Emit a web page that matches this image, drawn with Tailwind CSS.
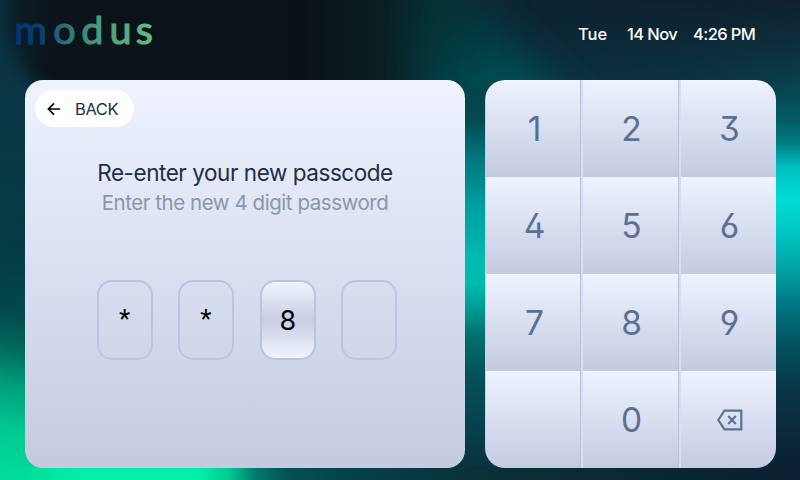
<!DOCTYPE html>
<html lang="en">
<head>
<meta charset="utf-8">
<title>modus – Passcode</title>
<script src="https://cdn.jsdelivr.net/npm/@tailwindcss/browser@4"></script>
</head>
<body class="relative w-[800px] h-[480px] overflow-hidden bg-[#0a2630] font-['Inter','Roboto',sans-serif]">
<!-- Aurora backdrop -->
<svg class="absolute inset-0" width="800" height="480" viewBox="0 0 800 480" aria-hidden="true">
  <defs>
    <linearGradient id="top"><stop offset="0" stop-color="#0b2430"/><stop offset=".035" stop-color="#0b1a24"/><stop offset=".07" stop-color="#0b131b"/><stop offset=".37" stop-color="#0a1117"/><stop offset=".46" stop-color="#091c1f"/><stop offset=".54" stop-color="#08292f"/><stop offset=".62" stop-color="#0c2634"/><stop offset=".75" stop-color="#0d2332"/><stop offset="1" stop-color="#0f2130"/></linearGradient>
    <linearGradient id="glow" x2="0" y2="1"><stop offset="0" stop-color="#075058" stop-opacity="0"/><stop offset=".4" stop-color="#075058" stop-opacity=".25"/><stop offset="1" stop-color="#045058" stop-opacity=".85"/></linearGradient>
    <linearGradient id="gmask"><stop offset="0" stop-color="#000"/><stop offset=".3" stop-color="#777"/><stop offset=".6" stop-color="#888"/><stop offset="1" stop-color="#fff"/></linearGradient>
    <mask id="m"><rect x="500" width="300" height="100" fill="url(#gmask)"/></mask>
    <linearGradient id="ray" gradientUnits="userSpaceOnUse" x1="420" y1="0" x2="500" y2="90"><stop offset="0" stop-color="#063438" stop-opacity=".5"/><stop offset=".5" stop-color="#043e42" stop-opacity=".8"/><stop offset="1" stop-color="#005257"/></linearGradient>
    <linearGradient id="left" gradientUnits="userSpaceOnUse" x1="0" y1="0" x2="-90" y2="470"><stop offset="0" stop-color="#0a2e3d"/><stop offset=".23" stop-color="#0a3846"/><stop offset=".5" stop-color="#053c44"/><stop offset=".63" stop-color="#02484b"/><stop offset=".71" stop-color="#01695b"/><stop offset=".79" stop-color="#00a07f"/><stop offset=".88" stop-color="#00ca92"/><stop offset="1" stop-color="#00e09c"/></linearGradient>
    <linearGradient id="gap" gradientUnits="userSpaceOnUse" x1="0" y1="80" x2="0" y2="480"><stop offset="0" stop-color="#04393f"/><stop offset=".1" stop-color="#034a50"/><stop offset=".2" stop-color="#027880"/><stop offset=".32" stop-color="#00a0a2"/><stop offset=".44" stop-color="#00b9af"/><stop offset=".51" stop-color="#00bbac"/><stop offset=".57" stop-color="#009c92"/><stop offset=".64" stop-color="#016f6d"/><stop offset=".74" stop-color="#045157"/><stop offset=".9" stop-color="#083d48"/><stop offset="1" stop-color="#0a3038"/></linearGradient>
    <linearGradient id="right" gradientUnits="userSpaceOnUse" x1="776" y1="80" x2="776" y2="480"><stop offset="0" stop-color="#064a54"/><stop offset=".1" stop-color="#035a62"/><stop offset=".16" stop-color="#017f84"/><stop offset=".22" stop-color="#00c1c0"/><stop offset=".3" stop-color="#00dcd6"/><stop offset=".38" stop-color="#00c6c2"/><stop offset=".47" stop-color="#00a3a6"/><stop offset=".57" stop-color="#017480"/><stop offset=".66" stop-color="#035260"/><stop offset=".78" stop-color="#0a3445"/><stop offset=".9" stop-color="#0a2738"/><stop offset="1" stop-color="#0a2030"/></linearGradient>
    <linearGradient id="bottom" gradientUnits="userSpaceOnUse" x1="0" y1="455" x2="800" y2="485"><stop offset="0" stop-color="#00dc9a"/><stop offset=".1" stop-color="#00eea7"/><stop offset=".25" stop-color="#00efa9"/><stop offset=".285" stop-color="#00cc96"/><stop offset=".32" stop-color="#017a6c"/><stop offset=".36" stop-color="#045052"/><stop offset=".45" stop-color="#074048"/><stop offset=".6" stop-color="#0a3038"/><stop offset="1" stop-color="#0a2030"/></linearGradient>
    <linearGradient id="fade" x2="0" y2="1"><stop offset="0" stop-color="#000"/><stop offset="1" stop-color="#fff"/></linearGradient>
    <linearGradient id="fadeX"><stop offset="0" stop-color="#000"/><stop offset="1" stop-color="#fff"/></linearGradient>
    <mask id="mBottom" maskUnits="userSpaceOnUse" x="0" y="440" width="800" height="40"><rect y="450" width="60" height="30" fill="url(#fadeX)"/><rect x="60" y="450" width="740" height="30" fill="#fff"/></mask>
    <filter id="soft" filterUnits="userSpaceOnUse" x="-80" y="-60" width="240" height="600"><feGaussianBlur stdDeviation="8"/></filter>
    <mask id="mLeft" maskUnits="userSpaceOnUse" x="0" y="0" width="60" height="480"><path d="M-60-40H2L8 40 28 76 80 120V520H-60Z" fill="#fff" filter="url(#soft)"/></mask>
    <mask id="mGap" maskUnits="userSpaceOnUse" x="455" y="80" width="50" height="400"><rect x="455" y="80" width="50" height="40" fill="url(#fade)"/><rect x="455" y="120" width="50" height="360" fill="#fff"/></mask>
    <mask id="mRight" maskUnits="userSpaceOnUse" x="740" y="60" width="60" height="420"><rect x="740" y="76" width="60" height="34" fill="url(#fade)"/><rect x="740" y="110" width="60" height="370" fill="#fff"/></mask>
    <filter id="b" x="-50%" y="-50%" width="200%" height="200%"><feGaussianBlur stdDeviation="20"/></filter>
  </defs>
  <rect width="800" height="140" fill="url(#top)"/>
  <rect x="500" width="300" height="100" fill="url(#glow)" mask="url(#m)"/>
  <rect x="740" y="99" width="60" height="20" fill="#064a54"/>
  <path d="M415-30 L445 -30 L620 160 L420 160Z" fill="url(#ray)" filter="url(#b)"/>
  <rect width="60" height="480" fill="url(#left)" mask="url(#mLeft)"/>
  <rect x="455" y="80" width="50" height="400" fill="url(#gap)" mask="url(#mGap)"/>
  <rect x="740" y="60" width="60" height="420" fill="url(#right)" mask="url(#mRight)"/>
  <rect y="467" width="776" height="13" fill="url(#bottom)" mask="url(#mBottom)"/>
</svg>

<div class="relative h-full flex flex-col">
  <header class="h-20 flex justify-between pl-[14px] pr-[44px]">
    <svg width="150" height="60" role="img" aria-label="modus">
      <defs><linearGradient id="logo" gradientUnits="userSpaceOnUse" x1="2" y1="0" x2="140" y2="0"><stop offset="0" stop-color="#02356f"/><stop offset=".18" stop-color="#083f73"/><stop offset=".35" stop-color="#2a7078"/><stop offset=".6" stop-color="#4b9d78"/><stop offset="1" stop-color="#66bd78"/></linearGradient></defs>
      <text x="0.2 39.3 67.3 95.5 121.8" y="43.8" fill="url(#logo)" stroke="url(#logo)" stroke-width="1.2" font-family="Lato" font-weight="400" font-size="39.5">modus</text>
    </svg>
    <div class="flex pt-[22px] h-[46px] items-center text-white font-medium text-[16.5px] leading-6 whitespace-nowrap">
      <span class="w-[49px]">Tue</span><span class="w-[66px] tracking-[-0.6px]">14 Nov</span><span class="w-[63px] tracking-[-0.6px]">4:26 PM</span>
    </div>
  </header>
  <main class="flex pl-[25px] gap-5 h-[388px]">
    <section class="w-[440px] rounded-[18px] bg-linear-to-b from-[#eff3ff] via-[#d9dff1] to-[#c4cbe0] p-[10px] flex flex-col">
      <button class="w-[99px] h-[37px] rounded-full bg-white flex items-center pl-3 text-[#1f2d45] text-base leading-6">
        <svg width="14" height="14" viewBox="0 0 14 14" fill="none" stroke="#000" stroke-width="1.7"><path d="M13.2 7H1.6M7 1.3 1.4 7 7 12.7"/></svg>
        <span class="ml-[14px] tracking-[-0.4px] text-[16.5px]">BACK</span>
      </button>
      <div class="mt-[30px] text-center whitespace-nowrap">
        <h1 class="text-[22.5px] leading-8 tracking-[-0.45px] text-[#1f2d45]">Re-enter your new passcode</h1>
        <p class="text-[20.5px] leading-7 tracking-[-0.45px] text-[#8a97aa]">Enter the new 4 digit password</p>
      </div>
      <div class="mt-[63px] ml-[62px] flex gap-[25.4px] text-[27px] text-black">
        <div class="w-14 h-20 rounded-[15px] border-2 border-[#bcc4e1] flex items-center justify-center font-['Roboto'] text-[26px] pb-px pr-px">*</div>
        <div class="w-14 h-20 rounded-[15px] border-2 border-[#bcc4e1] flex items-center justify-center font-['Roboto'] text-[26px] pb-px pr-px">*</div>
        <div class="w-14 h-20 rounded-[15px] border-2 border-[#bcc4e1] bg-linear-to-b from-[#eff3ff] via-[#c8cee3] to-[#eff3ff] flex items-center justify-center pt-0.5">8</div>
        <div class="w-14 h-20 rounded-[15px] border-2 border-[#bcc4e1]"></div>
      </div>
    </section>
    <section class="w-[291px] h-[388px] overflow-hidden rounded-[20px] grid grid-cols-[95px_98px_98px] grid-rows-4 text-[33.5px] text-[#5c7091] [font-feature-settings:'cv09','cv03','cv04','cv02']">
      <div class="flex items-center justify-center pl-[3px] pt-0.5 border-l border-[#c9cfe3] bg-linear-to-b from-[#eff3ff] via-[#d9dff1] to-[#c4cbe0]">1</div>
      <div class="flex items-center justify-center pl-1 pt-0.5 border-l border-[#b9c0da] shadow-[inset_2px_0_0_#d9dff2] bg-linear-to-b from-[#eff3ff] via-[#d9dff1] to-[#c4cbe0]">2</div>
      <div class="flex items-center justify-center pl-1 pt-0.5 border-l border-[#b9c0da] shadow-[inset_2px_0_0_#d9dff2] bg-linear-to-b from-[#eff3ff] via-[#d9dff1] to-[#c4cbe0]">3</div>
      <div class="flex items-center justify-center pl-[3px] pt-0.5 border-l border-[#c9cfe3] bg-linear-to-b from-[#eff3ff] via-[#d9dff1] to-[#c4cbe0]">4</div>
      <div class="flex items-center justify-center pl-1 pt-0.5 border-l border-[#b9c0da] shadow-[inset_2px_0_0_#d9dff2] bg-linear-to-b from-[#eff3ff] via-[#d9dff1] to-[#c4cbe0]">5</div>
      <div class="flex items-center justify-center pl-1 pt-0.5 border-l border-[#b9c0da] shadow-[inset_2px_0_0_#d9dff2] bg-linear-to-b from-[#eff3ff] via-[#d9dff1] to-[#c4cbe0]">6</div>
      <div class="flex items-center justify-center pl-[3px] pt-0.5 border-l border-[#c9cfe3] bg-linear-to-b from-[#eff3ff] via-[#d9dff1] to-[#c4cbe0]">7</div>
      <div class="flex items-center justify-center pl-1 pt-0.5 border-l border-[#b9c0da] shadow-[inset_2px_0_0_#d9dff2] bg-linear-to-b from-[#eff3ff] via-[#d9dff1] to-[#c4cbe0]">8</div>
      <div class="flex items-center justify-center pl-1 pt-0.5 border-l border-[#b9c0da] shadow-[inset_2px_0_0_#d9dff2] bg-linear-to-b from-[#eff3ff] via-[#d9dff1] to-[#c4cbe0]">9</div>
      <div class="border-l border-[#c9cfe3] bg-linear-to-b from-[#eff3ff] via-[#d9dff1] to-[#c4cbe0]"></div>
      <div class="flex items-center justify-center pl-1 pt-0.5 border-l border-[#b9c0da] shadow-[inset_2px_0_0_#d9dff2] bg-linear-to-b from-[#eff3ff] via-[#d9dff1] to-[#c4cbe0]">0</div>
      <div class="flex items-center justify-center pl-1 border-l border-[#b9c0da] shadow-[inset_2px_0_0_#d9dff2] bg-linear-to-b from-[#eff3ff] via-[#d9dff1] to-[#c4cbe0]">
        <svg width="26" height="22" viewBox="0 0 26 22" fill="none" stroke="#5c7091" stroke-width="2.2"><path d="M7.5 1.6H24.3V20.4H7.5L1.3 11ZM11.2 7l7.6 8M18.8 7 11.2 15"/></svg>
      </div>
    </section>
  </main>
</div>
</body>
</html>
